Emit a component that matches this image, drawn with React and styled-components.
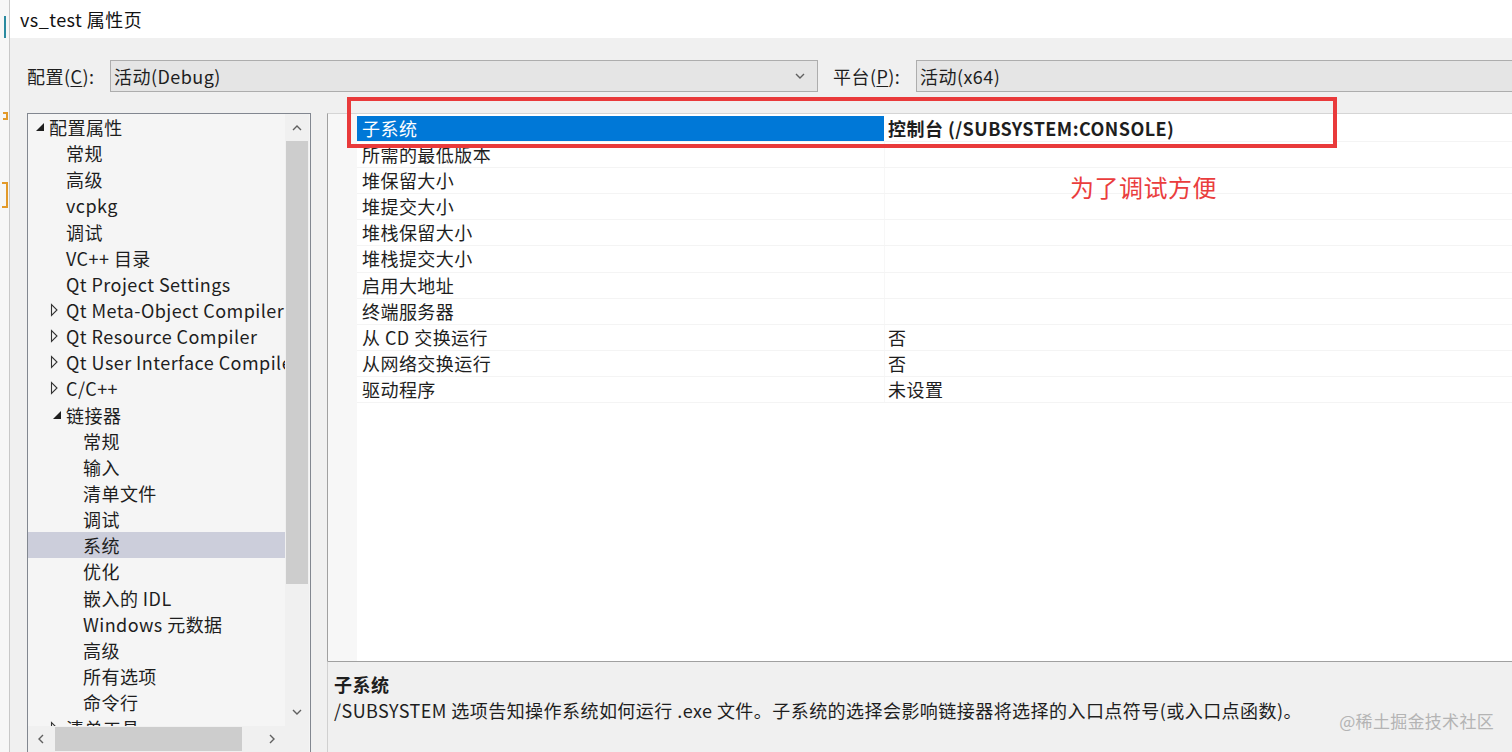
import React from 'react'
import styled, { createGlobalStyle } from 'styled-components'

const GlobalStyle = createGlobalStyle`
  html, body {
    margin: 0;
    padding: 0;
    height: 752px;
    overflow: hidden;
    background: #fbfbfb;
    font-family: "Noto Sans CJK SC", "Noto Sans", sans-serif;
    letter-spacing: 0.45px;
    color: #1e1e1e;
  }
`

const Page = styled.div`
  display: flex;
  height: 752px;
  overflow: hidden;
`

const EditorStrip = styled.div`
  width: 9px;
  flex-shrink: 0;
  display: flex;
  flex-direction: column;
  align-items: flex-end;
  background: #f7f7f7;
  border-right: 1px solid #c8c8c8;
`

const StripMark = styled.div`
  width: ${p => p.w || 3}px;
  height: ${p => p.h}px;
  margin-top: ${p => p.top}px;
  margin-right: ${p => p.right || 1}px;
  border: 2px solid ${p => p.color};
  border-left: none;
  ${p => p.line && `border: none; background: ${p.color};`}
`

const Dialog = styled.div`
  flex: 1;
  display: flex;
  flex-direction: column;
  min-width: 0;
`

const TitleBar = styled.div`
  height: 38px;
  flex-shrink: 0;
  background: #ffffff;
  display: flex;
  align-items: center;
  padding-left: 10px;
  font-size: 18px;
  color: #111;
`

const Body = styled.div`
  flex: 1;
  background: #f0f0f0;
  padding: 22px 0 0 17px;
  display: flex;
  flex-direction: column;
  gap: 21px;
  min-height: 0;
`

const ConfigRow = styled.div`
  display: flex;
  align-items: center;
  height: 32px;
`

const FieldLabel = styled.div`
  width: ${p => p.w}px;
  margin-left: ${p => p.ml || 0}px;
  font-size: 18px;
  line-height: 32px;
  flex-shrink: 0;
  u { text-decoration: underline; text-underline-offset: 2px; }
`

const Combo = styled.div`
  box-sizing: border-box;
  height: 32px;
  width: ${p => (p.w ? `${p.w}px` : 'auto')};
  flex: ${p => (p.w ? '0 0 auto' : '1')};
  margin-right: ${p => (p.w ? 0 : -4)}px;
  background: #e5e5e5;
  border: 1px solid #adadad;
  display: flex;
  align-items: center;
  justify-content: space-between;
  padding: 0 12px 0 3px;
  font-size: 18px;
`

const Main = styled.div`
  display: flex;
  gap: 16px;
  height: 650px;
  flex-shrink: 0;
`

const TreePanel = styled.div`
  width: 284px;
  flex-shrink: 0;
  box-sizing: border-box;
  border: 1px solid #828790;
  background: #f5f5f5;
  display: grid;
  grid-template-columns: 257px 24px;
  grid-template-rows: 612px 26px;
`

const TreeList = styled.div`
  overflow: hidden;
  padding-top: 0;
`

const TreeRow = styled.div`
  display: flex;
  align-items: center;
  height: 26.15px;
  padding-left: ${p => 5 + p.level * 17}px;
  white-space: nowrap;
  font-size: 18px;
  background: ${p => (p.selected ? '#cccedb' : 'transparent')};
  color: #1e1e1e;
`

const Expander = styled.span`
  width: 16px;
  height: 26px;
  flex-shrink: 0;
  display: inline-flex;
  align-items: center;
`

const ScrollTrack = styled.div`
  background: #f0f0f0;
  display: flex;
  flex-direction: ${p => (p.horizontal ? 'row' : 'column')};
  align-items: center;
`

const ScrollArrow = styled.div`
  width: ${p => (p.horizontal ? 26 : 24)}px;
  height: ${p => (p.horizontal ? 26 : 28)}px;
  flex-shrink: 0;
  display: flex;
  align-items: center;
  justify-content: center;
`

const ScrollThumb = styled.div`
  background: #cdcdcd;
  ${p =>
    p.horizontal
      ? `height: 24px; width: 187px; margin-left: 1px;`
      : `width: 22px; height: 443px; margin-top: -1px;`}
`

const Spacer = styled.div`
  flex: 1;
`

const Corner = styled.div`
  background: #f0f0f0;
`

const RightColumn = styled.div`
  flex: 1;
  display: flex;
  flex-direction: column;
  position: relative;
  margin-right: -4px;
  min-width: 0;
`

const Grid = styled.div`
  height: 548px;
  flex-shrink: 0;
  box-sizing: border-box;
  background: #ffffff;
  border-left: 1px solid #a0a0a0;
  border-top: 1px solid #d5d5d5;
  display: flex;
  padding-top: 2px;
`

const Gutter = styled.div`
  width: 29px;
  flex-shrink: 0;
  background: #f7f7f7;
  margin-top: -2px;
`

const Rows = styled.div`
  flex: 1;
  display: flex;
  flex-direction: column;
`

const PropRow = styled.div`
  display: grid;
  grid-template-columns: 528px 1fr;
  height: 26.1px;
  font-size: 18px;
  line-height: 25px;
  border-bottom: 1px solid #f4f4f4;
  box-sizing: border-box;
`

const PropName = styled.div`
  padding-left: 5px;
  white-space: nowrap;
  background: ${p => (p.selected ? '#0078d7' : 'transparent')};
  color: ${p => (p.selected ? '#ffffff' : '#1e1e1e')};
  border-right: 1px solid ${p => (p.selected ? '#ffffff' : '#f7f7f7')};
`

const PropValue = styled.div`
  padding-left: 3px;
  white-space: nowrap;
  font-weight: ${p => (p.bold ? 700 : 400)};
  color: #1e1e1e;
`

const Description = styled.div`
  flex: 1;
  position: relative;
  border-top: 1px solid #a0a0a0;
  border-left: 1px solid #d0d0d0;
  background: #f0f0f0;
  padding: 9px 0 0 6px;
  font-size: 18px;
  line-height: 26px;
`

const DescTitle = styled.div`
  font-weight: 700;
`

const Watermark = styled.div`
  position: absolute;
  right: 22px;
  top: 46px;
  font-size: 17px;
  color: #b4b4b4;
  letter-spacing: 0.3px;
`

const Callout = styled.div`
  position: absolute;
  left: 20px;
  top: -16px;
  width: 990px;
  height: 51px;
  box-sizing: border-box;
  border: 4px solid #e93a3b;
  pointer-events: none;
`

const CalloutNote = styled.div`
  position: absolute;
  left: 743px;
  top: 56px;
  font-size: 24px;
  color: #ea3d3d;
  letter-spacing: 0.5px;
`

const Chevron = ({ dir, size = 10, color = '#606060' }) => {
  const pts = {
    up: '1,7 5,3 9,7',
    down: '1,3 5,7 9,3',
    left: '7,1 3,5 7,9',
    right: '3,1 7,5 3,9',
  }[dir]
  return (
    <svg width={size} height={size} viewBox="0 0 10 10">
      <polyline points={pts} fill="none" stroke={color} strokeWidth="1.4" />
    </svg>
  )
}

const Triangle = ({ open }) =>
  open ? (
    <svg width="16" height="26" viewBox="0 0 16 26">
      <polygon points="11,9 11,17 3,17" fill="#1e1e1e" />
    </svg>
  ) : (
    <svg width="16" height="26" viewBox="0 0 16 26">
      <polygon points="1.5,7.5 1.5,18.5 7,13" fill="none" stroke="#333" strokeWidth="1.1" />
    </svg>
  )

const tree = [
  { t: '配置属性', l: 0, e: 'open' },
  { t: '常规', l: 1 },
  { t: '高级', l: 1 },
  { t: 'vcpkg', l: 1 },
  { t: '调试', l: 1 },
  { t: 'VC++ 目录', l: 1 },
  { t: 'Qt Project Settings', l: 1 },
  { t: 'Qt Meta-Object Compiler', l: 1, e: 'closed' },
  { t: 'Qt Resource Compiler', l: 1, e: 'closed' },
  { t: 'Qt User Interface Compiler', l: 1, e: 'closed' },
  { t: 'C/C++', l: 1, e: 'closed' },
  { t: '链接器', l: 1, e: 'open' },
  { t: '常规', l: 2 },
  { t: '输入', l: 2 },
  { t: '清单文件', l: 2 },
  { t: '调试', l: 2 },
  { t: '系统', l: 2, sel: true },
  { t: '优化', l: 2 },
  { t: '嵌入的 IDL', l: 2 },
  { t: 'Windows 元数据', l: 2 },
  { t: '高级', l: 2 },
  { t: '所有选项', l: 2 },
  { t: '命令行', l: 2 },
  { t: '清单工具', l: 1, e: 'closed' },
]

const props = [
  { n: '子系统', v: '控制台 (/SUBSYSTEM:CONSOLE)', sel: true },
  { n: '所需的最低版本' },
  { n: '堆保留大小' },
  { n: '堆提交大小' },
  { n: '堆栈保留大小' },
  { n: '堆栈提交大小' },
  { n: '启用大地址' },
  { n: '终端服务器' },
  { n: '从 CD 交换运行', v: '否' },
  { n: '从网络交换运行', v: '否' },
  { n: '驱动程序', v: '未设置' },
]

export default function App() {
  return (
    <>
      <GlobalStyle />
      <Page>
        <EditorStrip>
          <StripMark line color="#2a8aa0" w={2} h={22} top={16} right={3} />
          <StripMark color="#e39a2a" w={3} h={4} top={74} />
          <StripMark color="#e39a2a" w={4} h={22} top={62} />
        </EditorStrip>
        <Dialog>
          <TitleBar>vs_test 属性页</TitleBar>
          <Body>
            <ConfigRow>
              <FieldLabel w={83}>配置(<u>C</u>):</FieldLabel>
              <Combo w={708}>
                <span>活动(Debug)</span>
                <Chevron dir="down" />
              </Combo>
              <FieldLabel w={83} ml={15}>平台(<u>P</u>):</FieldLabel>
              <Combo>
                <span>活动(x64)</span>
              </Combo>
            </ConfigRow>
            <Main>
              <TreePanel>
                <TreeList>
                  {tree.map((item, i) => (
                    <TreeRow key={i} level={item.l} selected={item.sel}>
                      <Expander>{item.e && <Triangle open={item.e === 'open'} />}</Expander>
                      {item.t}
                    </TreeRow>
                  ))}
                </TreeList>
                <ScrollTrack>
                  <ScrollArrow>
                    <Chevron dir="up" />
                  </ScrollArrow>
                  <ScrollThumb />
                  <Spacer />
                  <ScrollArrow>
                    <Chevron dir="down" />
                  </ScrollArrow>
                </ScrollTrack>
                <ScrollTrack horizontal>
                  <ScrollArrow horizontal>
                    <Chevron dir="left" />
                  </ScrollArrow>
                  <ScrollThumb horizontal />
                  <Spacer />
                  <ScrollArrow horizontal>
                    <Chevron dir="right" />
                  </ScrollArrow>
                </ScrollTrack>
                <Corner />
              </TreePanel>
              <RightColumn>
                <Grid>
                  <Gutter />
                  <Rows>
                    {props.map((p, i) => (
                      <PropRow key={i}>
                        <PropName selected={p.sel}>{p.n}</PropName>
                        <PropValue bold={p.sel}>{p.v || ''}</PropValue>
                      </PropRow>
                    ))}
                  </Rows>
                </Grid>
                <Description>
                  <DescTitle>子系统</DescTitle>
                  <div>/SUBSYSTEM 选项告知操作系统如何运行 .exe 文件。子系统的选择会影响链接器将选择的入口点符号(或入口点函数)。</div>
                  <Watermark>@稀土掘金技术社区</Watermark>
                </Description>
                <Callout />
                <CalloutNote>为了调试方便</CalloutNote>
              </RightColumn>
            </Main>
          </Body>
        </Dialog>
      </Page>
    </>
  )
}
